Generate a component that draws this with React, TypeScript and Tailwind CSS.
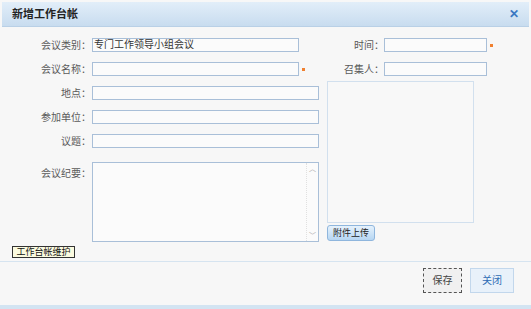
import React from "react";

const font = { fontFamily: '"Liberation Sans", "Noto Sans CJK SC", sans-serif' };

function Field({ label, width, value, star }: { label: string; width: string; value?: string; star?: boolean }) {
  return (
    <div className="flex items-center h-[24px]">
      <div className="w-[92px] pr-[1px] text-right text-[10px] text-[#5a5a5a]">{label}</div>
      <div className={`${width} h-[14px] border border-[#a9bfd8] bg-[#fbfbfb] text-[10px] leading-[12px] text-[#333] pl-[1px] overflow-hidden whitespace-nowrap`}>
        {value}
      </div>
      {star && <span className="ml-[3px] w-[3px] h-[3px] bg-[#f08030]" />}
    </div>
  );
}

export default function App() {
  return (
    <div style={font} className="w-[531px] h-[309px] bg-[#f7f7f7] flex flex-col overflow-hidden">
      <div className="mx-[2px] mt-[2px] h-[25px] flex items-center justify-between px-[10px] bg-gradient-to-b from-[#e2eef9] to-[#c8dcef] border-b border-[#b9d0e6]">
        <span className="text-[11px] font-bold text-[#222]">新增工作台帐</span>
        <span className="text-[12px] font-bold text-[#3a78c2] leading-none">✕</span>
      </div>

      <div className="flex mt-[6px]">
        <div className="w-[327px] flex flex-col">
          <Field label="会议类别：" width="w-[207px]" value="专门工作领导小组会议" />
          <Field label="会议名称：" width="w-[207px]" star />
          <Field label="地点：" width="w-[227px]" />
          <Field label="参加单位：" width="w-[227px]" />
          <Field label="议题：" width="w-[227px]" />
          <div className="flex mt-[9px]">
            <div className="w-[92px] pr-[1px] pt-[4px] text-right text-[10px] text-[#5a5a5a]">会议纪要：</div>
            <div className="w-[227px] h-[80px] border border-[#a9bfd8] bg-[#fbfbfb] flex justify-end">
              <div className="w-[12px] flex flex-col justify-between items-center py-[2px] border-l border-dotted border-[#e0e0e0]">
                <span className="text-[7px] text-[#aaa] leading-none">︿</span>
                <span className="text-[7px] text-[#aaa] leading-none">﹀</span>
              </div>
            </div>
          </div>
          <div className="ml-[12px] mt-[4px] w-[63px] h-[12px] border border-[#333] bg-[#fbfbe0] text-[9px] leading-[10px] text-[#111] text-center">
            工作台帐维护
          </div>
        </div>

        <div className="flex flex-col">
          <div className="flex items-center h-[24px]">
            <div className="w-[57px] text-right text-[10px] text-[#5a5a5a]">时间：</div>
            <div className="w-[103px] h-[14px] border border-[#a9bfd8] bg-[#fbfbfb]" />
            <span className="ml-[3px] w-[3px] h-[3px] bg-[#f08030]" />
          </div>
          <div className="flex items-center h-[24px]">
            <div className="w-[57px] text-right text-[10px] text-[#5a5a5a]">召集人：</div>
            <div className="w-[103px] h-[14px] border border-[#a9bfd8] bg-[#fbfbfb]" />
          </div>
          <div className="w-[147px] h-[142px] border border-[#d2e0ee] bg-[#f8f8f8]" />
          <div className="mt-[2px] w-[48px] h-[16px] rounded-[3px] border border-[#8fb6dd] bg-gradient-to-b from-[#e6f2fc] to-[#b6d6f2] text-[9px] leading-[14px] text-center text-[#222]">
            附件上传
          </div>
        </div>
      </div>

      <div className="mt-[3px] h-px bg-[#d6e4f0]" />

      <div className="flex justify-end gap-[8px] pr-[17px] mt-[6px]">
        <div className="w-[39px] h-[25px] border border-dashed border-[#555] bg-[#f0f0f0] text-[10px] text-[#444] flex items-center justify-center">保存</div>
        <div className="w-[44px] h-[25px] border border-[#c2d7ec] bg-[#e8f1fa] text-[10px] text-[#2f6db5] flex items-center justify-center">关闭</div>
      </div>

      <div className="mt-auto h-[4px] bg-[#d3e4f2]" />
    </div>
  );
}
